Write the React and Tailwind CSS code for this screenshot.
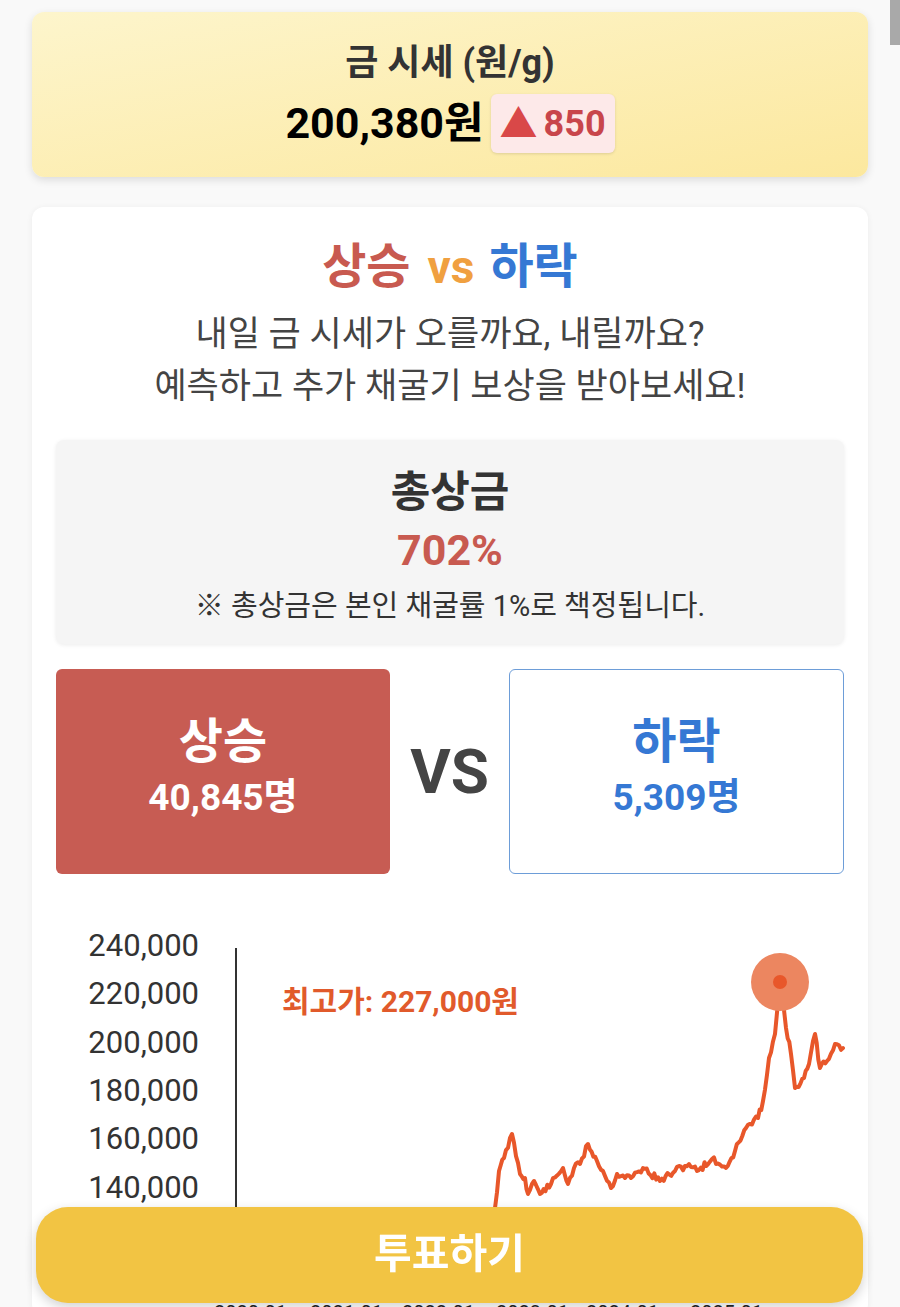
import React from "react";

const FONT = { fontFamily: 'Roboto, "Noto Sans CJK KR", sans-serif' };

// rough shape of the price history (page coordinates)
const KEY_POINTS = [
  [492, 1260], [495, 1207], [499, 1170], [504, 1157], [512, 1133], [520, 1173],
  [525, 1177], [528, 1193], [534, 1180], [540, 1193], [551, 1183], [563, 1167],
  [568, 1183], [574, 1167], [580, 1163], [588, 1143], [597, 1160], [603, 1170],
  [611, 1187], [617, 1173], [631, 1177], [643, 1167], [660, 1180], [675, 1170],
  [689, 1163], [697, 1170], [712, 1158], [726, 1167], [735, 1150], [746, 1127],
  [758, 1117], [763, 1100], [769, 1057], [775, 1033], [780, 982], [786, 1027],
  [791, 1053], [795, 1087], [804, 1077], [809, 1063], [815, 1033], [820, 1067],
  [827, 1060], [835, 1043], [843, 1047],
];

function buildPath() {
  let seed = 11;
  const rnd = () => {
    seed = (seed * 9301 + 49297) % 233280;
    return seed / 233280;
  };
  const pts = [];
  for (let i = 0; i < KEY_POINTS.length - 1; i++) {
    const [x1, y1] = KEY_POINTS[i];
    const [x2, y2] = KEY_POINTS[i + 1];
    const n = Math.max(1, Math.round((x2 - x1) / 2));
    for (let j = 0; j < n; j++) {
      const t = j / n;
      const jitter = j === 0 ? 0 : (rnd() - 0.5) * 7;
      pts.push([x1 + (x2 - x1) * t, y1 + (y2 - y1) * t + jitter]);
    }
  }
  pts.push(KEY_POINTS[KEY_POINTS.length - 1]);
  return "M" + pts.map((p) => p[0].toFixed(1) + "," + p[1].toFixed(1)).join(" L");
}

const LINE_PATH = buildPath();
const Y_LABELS = ["240,000", "220,000", "200,000", "180,000", "160,000", "140,000", "120,000"];
const X_LABELS = [
  [214, "2020-01"],
  [310, "2021-01"],
  [402, "2022-01"],
  [496, "2023-01"],
  [586, "2024-01"],
  [690, "2025-01"],
];

function PriceChart() {
  return (
    <svg width="789" height="400" className="block mt-[42px]">
      <g transform="translate(-56,-915)" style={FONT}>
        {Y_LABELS.map((label, i) => (
          <text
            key={label}
            x="199"
            y={947 + i * 48.3}
            textAnchor="end"
            dominantBaseline="middle"
            fontSize="31"
            fill="#333"
          >
            {label}
          </text>
        ))}
        <line x1="236" y1="947" x2="236" y2="1290" stroke="#333" strokeWidth="2" />
        {X_LABELS.map(([x, label]) => (
          <text key={label} x={x} y="1304" dominantBaseline="hanging" fontSize="20" fill="#222">
            {label}
          </text>
        ))}
        <text x="282" y="1003" dominantBaseline="middle" fontSize="30" fontWeight="700" fill="#e15a2b">
          최고가: 227,000원
        </text>
        <path d={LINE_PATH} fill="none" stroke="#e8572a" strokeWidth="4" strokeLinejoin="round" strokeLinecap="round" />
        <circle cx="780" cy="981" r="29" fill="#ec8660" />
        <circle cx="780" cy="981" r="7" fill="#e8572a" />
      </g>
    </svg>
  );
}

export default function App() {
  return (
    <div className="h-[1307px] overflow-hidden bg-[#f9f9f9] px-8 pt-3 relative" style={FONT}>
      <div className="absolute top-0 right-0 w-[10px] h-[45px] bg-[#a9a9a9]" />

      {/* gold price card */}
      <div className="rounded-xl bg-linear-to-br from-[#fdf5cc] to-[#fce89e] shadow-[0_3px_8px_rgba(0,0,0,0.12)] pt-[28px] pb-[24px] flex flex-col items-center">
        <div className="text-[36px] leading-[46px] font-bold text-[#333]">금 시세 (원/g)</div>
        <div className="mt-2 flex items-center gap-[7px]">
          <span className="text-[43px] font-bold text-black leading-none">200,380원</span>
          <span className="h-[59px] px-[9px] flex items-center gap-[6px] rounded-md bg-[#fde9e9] shadow-[0_1px_3px_rgba(0,0,0,0.12)]">
            <span className="text-[38px] leading-none text-[#d94848]">▲</span>
            <span className="text-[36px] font-bold leading-none text-[#c8454b]">850</span>
          </span>
        </div>
      </div>

      {/* vote card */}
      <div className="mt-[30px] rounded-xl bg-white shadow-[0_1px_6px_rgba(0,0,0,0.06)] px-6 pt-8">
        <div className="text-center leading-[56px] font-bold">
          <span className="text-[48px] text-[#c85a50]">상승</span>
          <span className="text-[46px] text-[#f0a040] ml-[17px] mr-[15px]">vs</span>
          <span className="text-[48px] text-[#3578d4]">하락</span>
        </div>
        <div className="mt-[3px] text-center text-[35px] leading-[52px] text-[#444]">
          <div>내일 금 시세가 오를까요, 내릴까요?</div>
          <div>예측하고 추가 채굴기 보상을 받아보세요!</div>
        </div>

        <div className="mt-[27px] rounded-lg bg-[#f5f5f5] shadow-[0_1px_4px_rgba(0,0,0,0.08)] pt-7 pb-5 flex flex-col items-center">
          <div className="text-[43px] leading-[48px] font-bold text-[#333]">총상금</div>
          <div className="mt-[10px] text-[43px] leading-[48px] font-bold text-[#c85a50]">702%</div>
          <div className="mt-[14px] text-[29px] leading-[36px] text-[#333]">※ 총상금은 본인 채굴률 1%로 책정됩니다.</div>
        </div>

        <div className="mt-[25px] flex items-center">
          <div className="w-[334px] h-[205px] pb-[10px] rounded-md bg-[#c75c53] flex flex-col items-center justify-center text-white font-bold">
            <div className="text-[48px] leading-[56px]">상승</div>
            <div className="mt-[6px] text-[37px] leading-[44px]">40,845명</div>
          </div>
          <div className="flex-1 text-center text-[62px] font-bold text-[#444] leading-none">VS</div>
          <div className="w-[335px] h-[205px] pb-[10px] rounded-md bg-white border border-[#6d9dd8] flex flex-col items-center justify-center text-[#3578d4] font-bold">
            <div className="text-[48px] leading-[56px]">하락</div>
            <div className="mt-[6px] text-[37px] leading-[44px]">5,309명</div>
          </div>
        </div>

        <PriceChart />
      </div>

      <button className="fixed left-[36px] right-[37px] bottom-[4px] h-[96px] rounded-[32px] bg-[#f2c443] shadow-[0_4px_12px_rgba(0,0,0,0.18)] text-white text-[41px] font-bold">
        투표하기
      </button>
    </div>
  );
}
